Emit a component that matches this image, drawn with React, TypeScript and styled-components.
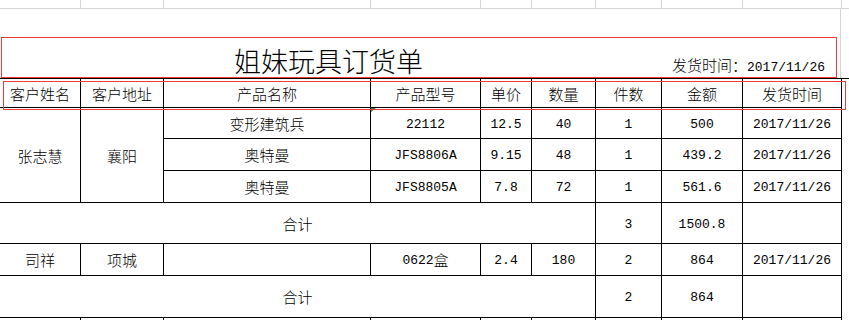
import React from "react";
import styled, { createGlobalStyle } from "styled-components";

const GlobalStyle = createGlobalStyle`
  html, body {
    margin: 0;
    padding: 0;
    background: #ffffff;
    overflow: hidden;
  }
  body {
    width: 849px;
    height: 320px;
    font-family: "Noto Sans CJK SC", "Noto Sans", sans-serif;
    color: #000000;
  }
`;

const COLS = "80px 82px 206px 109px 50px 63px 65px 80px 98px";
const GRID = "#d4d4d4";
const RED = "#ee3b3b";

const Sheet = styled.div`
  position: relative;
  width: 849px;
  height: 320px;
  overflow: hidden;
  background: #ffffff;
`;

const TopStrip = styled.div`
  display: grid;
  grid-template-columns: ${COLS} 1fr;
  column-gap: 1px;
  height: 8px;
  background: ${GRID};
  border-bottom: 1px solid ${GRID};
`;

const BlankCell = styled.div`
  background: #ffffff;
`;

const TitleZone = styled.div`
  display: flex;
  height: 69px;
  border-bottom: 1px solid #000000;
`;

const TitleCell = styled.div`
  width: 841px;
  box-sizing: border-box;
  border-right: 1px solid ${GRID};
  display: flex;
  align-items: flex-end;
  justify-content: space-between;
  padding: 0 15px 4px 234px;
`;

const Title = styled.h1`
  margin: 0;
  font-family: "Noto Sans CJK SC", sans-serif;
  font-weight: 300;
  font-size: 27px;
  line-height: 1;
  color: #000000;
  letter-spacing: 0;
`;

const ShipDate = styled.div`
  font-size: 15px;
  font-weight: 300;
  line-height: 1;
  white-space: nowrap;
`;

const Table = styled.div`
  display: grid;
  grid-template-columns: ${COLS};
  grid-template-rows: 28px 30px 31px 31px 40px 31px 41px 31px;
  gap: 1px;
  padding-right: 1px;
  width: max-content;
  background: #000000;
`;

const Cell = styled.div<{ $col?: string; $row?: string; $mark?: boolean }>`
  position: relative;
  background: #ffffff;
  display: flex;
  align-items: center;
  justify-content: center;
  font-size: 15px;
  font-weight: 300;
  white-space: nowrap;
  overflow: hidden;
  grid-column: ${(p) => p.$col ?? "auto"};
  grid-row: ${(p) => p.$row ?? "auto"};

  ${(p) =>
    p.$mark
      ? `&::before {
          content: "";
          position: absolute;
          left: 0;
          top: 0;
          border-top: 4px solid #1f8a1f;
          border-right: 5px solid transparent;
        }`
      : ""}
`;

const Num = styled.span<{ $flat?: boolean }>`
  font-family: "Liberation Mono", monospace;
  font-weight: 400;
  font-size: 13px;
  position: relative;
  top: ${(p) => (p.$flat ? 0 : 1)}px;
`;

const RedFrame = styled.div<{ $l: number; $t: number; $w: number; $h: number }>`
  position: absolute;
  left: ${(p) => p.$l}px;
  top: ${(p) => p.$t}px;
  width: ${(p) => p.$w}px;
  height: ${(p) => p.$h}px;
  box-sizing: border-box;
  border: 1px solid ${RED};
  pointer-events: none;
`;

const headers = ["客户姓名", "客户地址", "产品名称", "产品型号", "单价", "数量", "件数", "金额", "发货时间"];

type Line = { name: string; model: string; price: string; qty: string; pcs: string; amount: string; date: string };

const lines: Line[] = [
  { name: "变形建筑兵", model: "22112", price: "12.5", qty: "40", pcs: "1", amount: "500", date: "2017/11/26" },
  { name: "奥特曼", model: "JFS8806A", price: "9.15", qty: "48", pcs: "1", amount: "439.2", date: "2017/11/26" },
  { name: "奥特曼", model: "JFS8805A", price: "7.8", qty: "72", pcs: "1", amount: "561.6", date: "2017/11/26" },
];

export default function App() {
  return (
    <>
      <GlobalStyle />
      <Sheet>
        <TopStrip>
          {Array.from({ length: 10 }).map((_, i) => (
            <BlankCell key={i} />
          ))}
        </TopStrip>
        <TitleZone>
          <TitleCell>
            <Title>姐妹玩具订货单</Title>
            <ShipDate>
              发货时间：<Num $flat>2017/11/26</Num>
            </ShipDate>
          </TitleCell>
        </TitleZone>
        <Table>
          {headers.map((h) => (
            <Cell key={h}>{h}</Cell>
          ))}

          <Cell $col="1" $row="2 / 5">张志慧</Cell>
          <Cell $col="2" $row="2 / 5">襄阳</Cell>
          {lines.map((l, i) => (
            <React.Fragment key={i}>
              <Cell>{l.name}</Cell>
              <Cell $mark={i === 0}>
                <Num>{l.model}</Num>
              </Cell>
              <Cell>
                <Num>{l.price}</Num>
              </Cell>
              <Cell>
                <Num>{l.qty}</Num>
              </Cell>
              <Cell>
                <Num>{l.pcs}</Num>
              </Cell>
              <Cell>
                <Num>{l.amount}</Num>
              </Cell>
              <Cell>
                <Num>{l.date}</Num>
              </Cell>
            </React.Fragment>
          ))}

          <Cell $col="1 / 7">合计</Cell>
          <Cell>
            <Num>3</Num>
          </Cell>
          <Cell>
            <Num>1500.8</Num>
          </Cell>
          <Cell />

          <Cell>司祥</Cell>
          <Cell>项城</Cell>
          <Cell />
          <Cell>
            <Num>0622</Num>盒
          </Cell>
          <Cell>
            <Num>2.4</Num>
          </Cell>
          <Cell>
            <Num>180</Num>
          </Cell>
          <Cell>
            <Num>2</Num>
          </Cell>
          <Cell>
            <Num>864</Num>
          </Cell>
          <Cell>
            <Num>2017/11/26</Num>
          </Cell>

          <Cell $col="1 / 7">合计</Cell>
          <Cell>
            <Num>2</Num>
          </Cell>
          <Cell>
            <Num>864</Num>
          </Cell>
          <Cell />

          {Array.from({ length: 9 }).map((_, i) => (
            <Cell key={`e${i}`} />
          ))}
        </Table>
        <RedFrame $l={1} $t={37} $w={836} $h={41} />
        <RedFrame $l={3} $t={81} $w={843} $h={29} />
      </Sheet>
    </>
  );
}
